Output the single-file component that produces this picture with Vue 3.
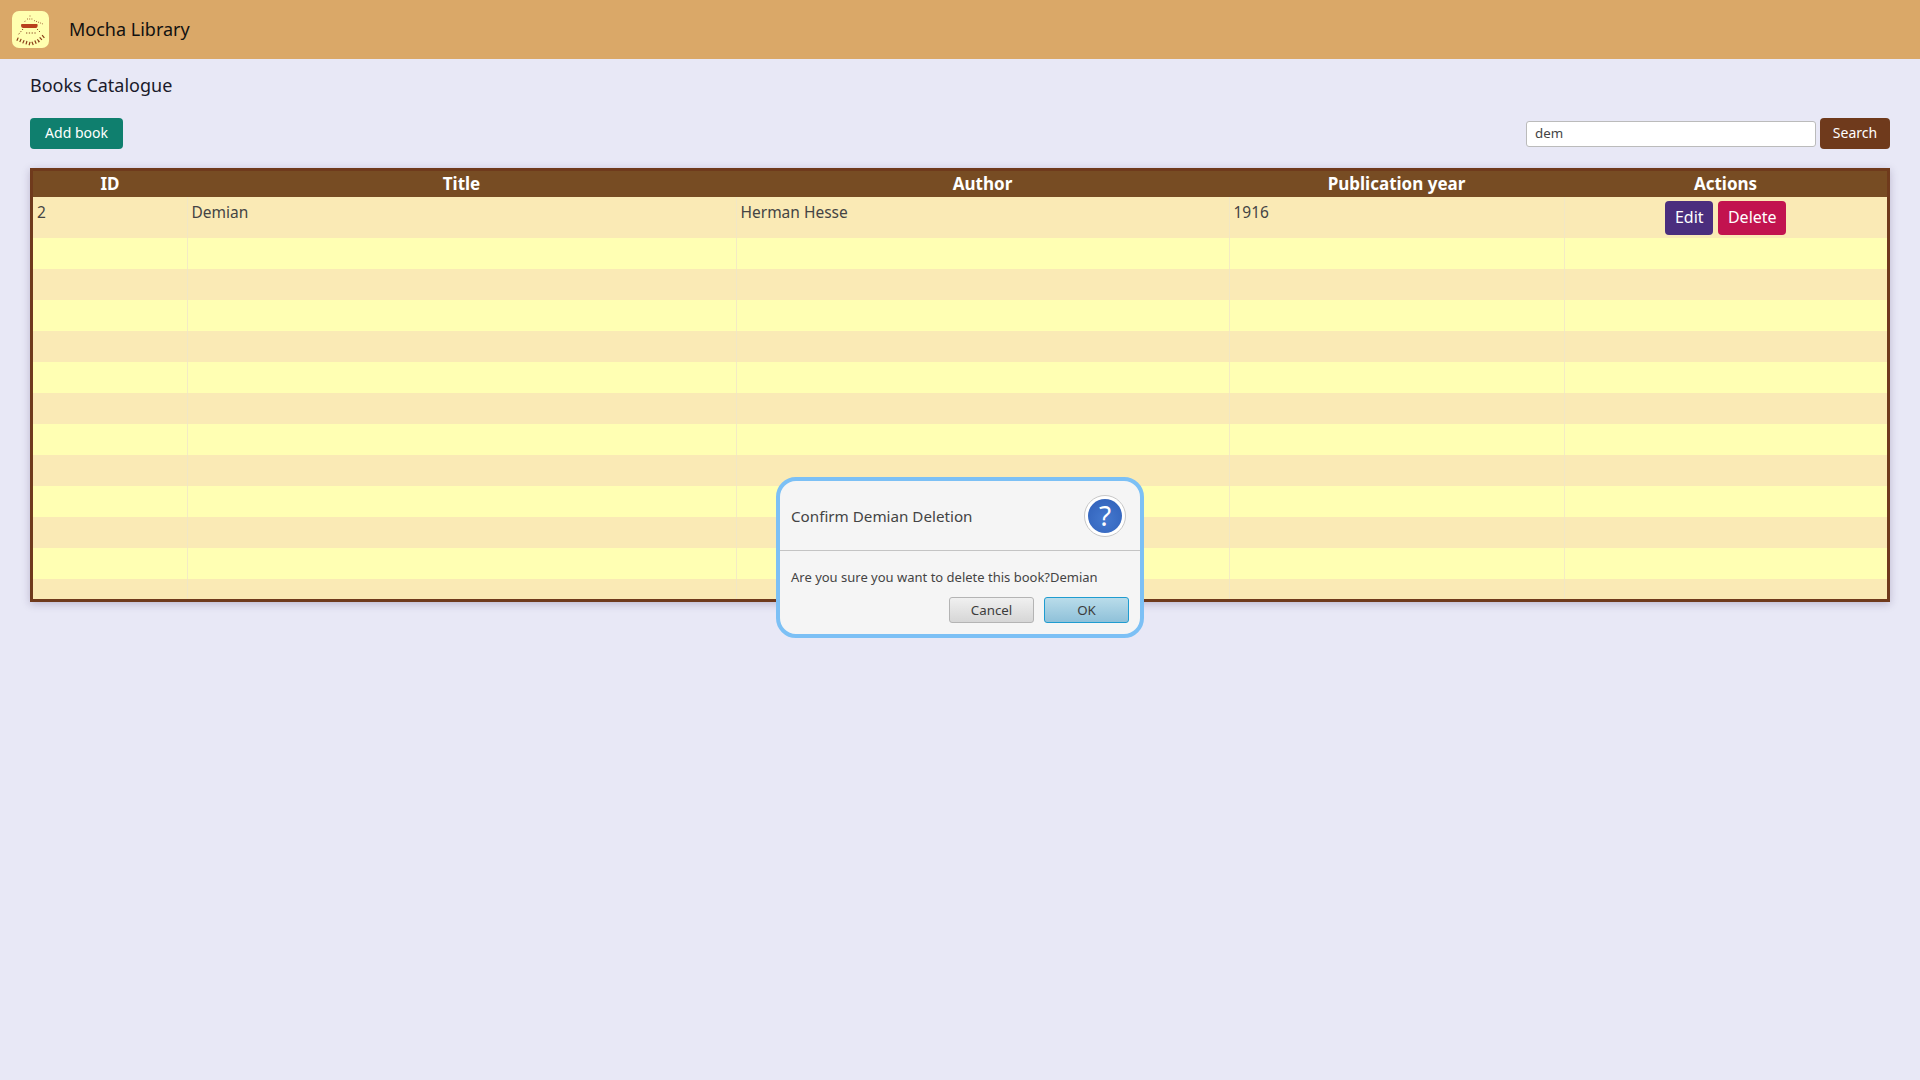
<script setup>
import { ref } from 'vue';

const search = ref('dem');
const columns = ['ID', 'Title', 'Author', 'Publication year', 'Actions'];
const books = [
  { id: 2, title: 'Demian', author: 'Herman Hesse', year: 1916 },
];
const emptyRows = 12;
</script>

<template>
  <div class="page">
    <header class="topbar">
      <svg class="logo" viewBox="0 0 37 37">
        <rect width="37" height="37" rx="7" fill="#ffffb0" />
        <path d="M18 4.500v1.500M15 8h6M12.500 11l1.500-2M22 9.500l9 3.500" stroke="#a4633a" stroke-width="1" stroke-dasharray="1 1.200" fill="none" />
        <path d="M9.500 13h15.500c1 0 1 3.500-1 4h-13c-2-.3-2.500-3-1.500-4z" fill="#b8401c" />
        <path d="M11 18l-5 6M25 18l3 3M14 22h11" stroke="#8a4a24" stroke-width="1" stroke-dasharray="1.300 1.500" fill="none" />
        <path d="M5 28l7 3 7 2 7-3 7-6" stroke="#8a3d18" stroke-width="3.500" stroke-dasharray="1.200 2" fill="none" />
      </svg>
      <span class="brand">Mocha Library</span>
    </header>

    <main class="content">
      <h1 class="heading">Books Catalogue</h1>

      <div class="toolbar">
        <button class="btn btn-add">Add book</button>
        <div class="search">
          <input v-model="search" class="search-input" type="text" />
          <button class="btn btn-search">Search</button>
        </div>
      </div>

      <div class="table-wrap">
        <table class="books">
          <colgroup>
            <col class="col-id" />
            <col class="col-title" />
            <col class="col-author" />
            <col class="col-year" />
            <col />
          </colgroup>
          <thead>
            <tr>
              <th v-for="col in columns" :key="col">{{ col }}</th>
            </tr>
          </thead>
          <tbody>
            <tr v-for="book in books" :key="book.id" class="row-book">
              <td>{{ book.id }}</td>
              <td>{{ book.title }}</td>
              <td>{{ book.author }}</td>
              <td>{{ book.year }}</td>
              <td class="actions">
                <button class="btn btn-edit">Edit</button>
                <button class="btn btn-delete">Delete</button>
              </td>
            </tr>
            <tr v-for="n in emptyRows" :key="n" class="row-empty">
              <td v-for="c in 5" :key="c"></td>
            </tr>
          </tbody>
        </table>
      </div>
    </main>

    <div class="dialog">
      <div class="dialog-head">
        <span class="dialog-title">Confirm Demian Deletion</span>
        <span class="dialog-icon"><span class="dialog-icon-inner">?</span></span>
      </div>
      <div class="dialog-body">
        <p class="dialog-text">Are you sure you want to delete this book?Demian</p>
        <div class="dialog-btns">
          <button class="dlg-btn">Cancel</button>
          <button class="dlg-btn dlg-ok">OK</button>
        </div>
      </div>
    </div>
  </div>
</template>

<style>
html,
body {
  margin: 0;
  background: #e8e8f6;
}
</style>

<style scoped>
.page {
  position: relative;
  min-height: 1080px;
  background: #e8e8f6;
  font-family: 'Noto Sans', 'Open Sans', sans-serif;
  color: #333;
  overflow: hidden;
}

.topbar {
  height: 59px;
  box-sizing: border-box;
  padding: 0 0 2px 12px;
  background: #daa868;
  display: flex;
  align-items: center;
}

.logo {
  width: 37px;
  height: 37px;
  margin: 2px 20px 0 0;
}

.brand {
  font-size: 18px;
  color: #111;
}

.content {
  padding: 0 30px;
}

.heading {
  margin: 0;
  padding-top: 14px;
  height: 45px;
  line-height: 25px;
  font-size: 18px;
  font-weight: 400;
  color: #1a1a2a;
}

.toolbar {
  display: flex;
  justify-content: space-between;
  align-items: center;
  height: 31px;
}

.search {
  display: flex;
  align-items: center;
  gap: 4px;
}

.search-input {
  box-sizing: border-box;
  width: 290px;
  height: 26px;
  padding: 0 8px 2px;
  border: 1px solid #bbb;
  border-radius: 3px;
  background: #fff;
  font-family: inherit;
  font-size: 13.300px;
  color: #444;
  outline: none;
}

.btn {
  border: none;
  border-radius: 4px;
  color: #fff;
  font-family: inherit;
  padding: 0 0 2px;
}

.btn-add {
  width: 93px;
  height: 31px;
  background: #0f7f6e;
  font-size: 14px;
}

.btn-search {
  width: 70px;
  height: 31px;
  background: #6f3a1c;
  font-size: 14px;
}

.table-wrap {
  box-sizing: border-box;
  margin-top: 19px;
  height: 434px;
  border: 3px solid #6f3a1c;
  overflow: hidden;
  background: #ffffb3;
  box-shadow: 0 2px 8px rgba(60, 40, 90, 0.25);
}

.books {
  width: 1854px;
  table-layout: fixed;
  border-collapse: collapse;
}

.col-id {
  width: 154px;
}
.col-title {
  width: 549px;
}
.col-author {
  width: 493px;
}
.col-year {
  width: 335px;
}

th {
  height: 26px;
  padding: 0;
  background: #774c23;
  color: #fff;
  font-size: 17px;
  font-weight: 700;
  line-height: 26px;
  text-align: center;
}

td {
  padding: 0 4px;
  border-right: 1px solid rgba(240, 230, 200, 0.8);
  font-size: 15.500px;
  color: #444;
  vertical-align: top;
}

td:last-child {
  border-right: none;
}

tbody tr:nth-child(odd) {
  background: #faeab5;
}

tbody tr:nth-child(even) {
  background: #ffffb3;
}

.row-book {
  height: 41px;
}

.row-book td {
  padding-top: 4px;
  box-sizing: border-box;
  line-height: 22px;
}

.row-empty {
  height: 31px;
}

td.actions {
  padding: 4px 0 3px;
  text-align: center;
  font-size: 0;
}

.btn-edit,
.btn-delete {
  height: 34px;
  font-size: 16px;
}

.btn-edit {
  width: 48px;
  background: #4b2e7e;
  margin-right: 5px;
}

.btn-delete {
  width: 68px;
  background: #c2134f;
}

.dialog {
  position: absolute;
  left: 776px;
  top: 477px;
  box-sizing: border-box;
  width: 368px;
  height: 161px;
  border: 4px solid #7cc0f5;
  border-radius: 20px;
  background: #f5f5f5;
  color: #444;
}

.dialog-head {
  height: 70px;
  box-sizing: border-box;
  padding: 0 14px 0 11px;
  display: flex;
  align-items: center;
  justify-content: space-between;
  border-bottom: 1px solid #c4c4c4;
}

.dialog-title {
  font-size: 15.200px;
}

.dialog-icon {
  box-sizing: border-box;
  width: 42px;
  height: 42px;
  border: 1px solid #c8c8c8;
  border-radius: 50%;
  background: #fff;
  display: flex;
  align-items: center;
  justify-content: center;
}

.dialog-icon-inner {
  width: 34px;
  height: 34px;
  border-radius: 50%;
  background: radial-gradient(circle at 50% 60%, #4479cf, #2f5fb8);
  color: #fff;
  font-size: 28px;
  line-height: 33px;
  text-align: center;
}

.dialog-body {
  padding: 0 11px;
}

.dialog-text {
  margin: 0;
  padding-top: 16px;
  height: 30px;
  line-height: 20px;
  font-size: 13px;
}

.dialog-btns {
  display: flex;
  justify-content: flex-end;
  gap: 10px;
}

.dlg-btn {
  box-sizing: border-box;
  width: 85px;
  height: 26px;
  padding: 0;
  border: 1px solid #b4b4b4;
  border-radius: 3px;
  background: linear-gradient(#f0f0f0, #d6d6d6);
  font-family: inherit;
  font-size: 13.300px;
  color: #3c3c3c;
}

.dlg-ok {
  border: 1.500px solid #1f9cd0;
  background: linear-gradient(#b9dcea, #8fc1d9);
}
</style>
